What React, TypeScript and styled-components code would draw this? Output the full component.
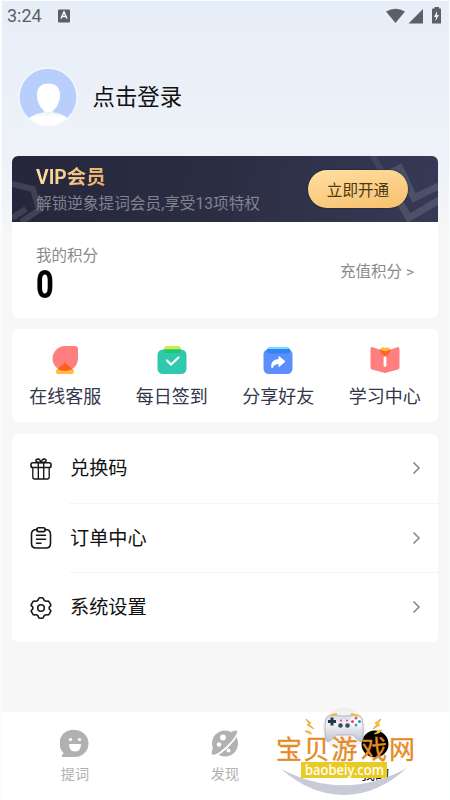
import React from "react";
import styled, { createGlobalStyle } from "styled-components";

const Global = createGlobalStyle`
  * { box-sizing: border-box; }
  body { margin: 0; background: #fff; }
`;

const Screen = styled.div`
  position: relative;
  width: 450px;
  height: 800px;
  overflow: hidden;
  display: flex;
  flex-direction: column;
  border: solid #fbfcfd;
  border-width: 1px 1px 0 2px;
  background: linear-gradient(180deg, #e6eef9 0, #ebf0f8 85px, #f0f3f8 195px, #f7f7f7 235px);
  font-family: "Roboto", "Noto Sans CJK SC", sans-serif;
  color: #111;
`;

const StatusBar = styled.header`
  display: flex;
  align-items: center;
  height: 30px;
  padding: 0 7px 0 5px;
  color: #5c6064;
`;

const Clock = styled.span`
  font-size: 18px;
  line-height: 30px;
  width: 50px;
`;

const StatusIcons = styled.div`
  display: flex;
  margin-left: auto;
`;

const Profile = styled.section`
  display: flex;
  align-items: center;
  gap: 14.5px;
  height: 60px;
  margin: 36px 0 29px 16px;
`;

const LoginText = styled.h1`
  margin: 0;
  font-size: 22.4px;
  line-height: 32px;
  font-weight: 400;
`;

const Card = styled.section<{ $height: number; $gap: number }>`
  flex: none;
  height: ${(p) => p.$height}px;
  margin: 0 11px ${(p) => p.$gap}px 10px;
  border-radius: 6px;
  overflow: hidden;
  background: #fff;
`;

const Banner = styled.div`
  position: relative;
  display: flex;
  align-items: center;
  justify-content: space-between;
  height: 66px;
  padding: 0 30px 0 24px;
  background: linear-gradient(100deg, #25263b, #2b2e43 50%, #363a56);
`;

const BannerPattern = styled.svg`
  position: absolute;
  inset: 0;
`;

const BannerCopy = styled.div`
  position: relative;
  padding-top: 2px;
`;

const VipTitle = styled.h2`
  margin: 0;
  width: max-content;
  font-size: 19.4px;
  line-height: 27px;
  font-weight: 700;
  background: linear-gradient(100deg, #fde0a6, #e8ad68);
  background-clip: text;
  color: transparent;
`;

const VipNote = styled.p`
  margin: 0;
  font-size: 15.65px;
  line-height: 25px;
  color: #82838f;
  white-space: nowrap;
`;

const OpenButton = styled.button`
  position: relative;
  width: 100px;
  height: 38px;
  padding: 0;
  border: 0;
  border-radius: 19px;
  background: linear-gradient(170deg, #ffdfa2, #f6c06d);
  box-shadow: 0 0 2px #1b1a28;
  color: #4e3812;
  font: 400 15.6px/37px "Noto Sans CJK SC", sans-serif;
`;

const Points = styled.div`
  display: flex;
  align-items: center;
  justify-content: space-between;
  height: 96px;
  padding: 0 24px;
  color: #8a8a8a;
  font-size: 15.5px;
`;

const PointsLabel = styled.div`
  line-height: 24px;
  margin-top: 7px;
`;

const PointsValue = styled.div`
  height: 35px;
  font-size: 38px;
  line-height: 34px;
  font-weight: 800;
  color: #000;
  transform: scaleX(0.81);
  transform-origin: left;
`;

const Recharge = styled.a`
  line-height: 24px;
  margin-top: 3px;
`;

const QuickGrid = styled.div`
  display: grid;
  grid-template-columns: repeat(4, 106.5px);
  height: 100%;
  padding-top: 16px;
`;

const QuickItem = styled.div`
  display: flex;
  flex-direction: column;
  align-items: center;
  gap: 7px;
  font-size: 18px;
  line-height: 29px;
  color: #34364a;
`;

const MenuRow = styled.div`
  display: flex;
  align-items: center;
  height: 69.5px;
  padding-left: 18px;
`;

const MenuBody = styled.div<{ $divided: boolean }>`
  display: flex;
  flex: 1;
  align-items: center;
  justify-content: space-between;
  height: 100%;
  margin-left: 17px;
  padding: 0 15px 0 1px;
  border-bottom: ${(p) => (p.$divided ? "1px solid #f5f5f5" : "1px solid transparent")};
  font-size: 19.2px;
`;

const MenuLabel = styled.span`
  line-height: 28px;
  margin-top: 2px;
`;

const TabBar = styled.nav`
  display: grid;
  grid-template-columns: repeat(3, 1fr);
  height: 88px;
  margin: auto -1px 0 -2px;
  background: #fff;
`;

const Tab = styled.div<{ $active?: boolean }>`
  display: flex;
  flex-direction: column;
  align-items: center;
  padding-top: 16px;
  gap: 4px;
  font-size: 14.2px;
  line-height: 20px;
  color: ${(p) => (p.$active ? "#111" : "#b1b1b1")};
`;

const Watermark = styled.svg`
  position: absolute;
  left: 273px;
  top: 705px;
`;

const Corner = styled.i`
  position: absolute;
  left: -2px;
  bottom: 0;
  width: 2px;
  height: 2px;
  background: #555;
  border-top-right-radius: 2px;
`;

const Avatar = () => (
  <svg width="60" height="60" viewBox="0 0 60 60">
    <defs>
      <clipPath id="face"><circle cx="30" cy="30" r="29" /></clipPath>
      <linearGradient id="body" x2="0" y2="1">
        <stop stopColor="#dce7fd" /><stop offset=".5" stopColor="#fff" />
      </linearGradient>
    </defs>
    <circle cx="30" cy="30" r="29" fill="#b8cffb" />
    <g clipPath="url(#face)">
      <path d="M25.500 41H35.500V45.500C42 46 48 49 51 53V60H9V53C13 49 19 46 25.500 45.500Z" fill="url(#body)" />
      <path d="M30.500 16.500C38 16.500 42.500 21 42 29C41.500 38 36 45 30.500 45S19.500 38 19 29C18.500 21 23 16.500 30.500 16.500Z" fill="#fff" />
    </g>
    <circle cx="30" cy="30" r="29" fill="none" stroke="#f5f9ff" strokeWidth="1.300" />
  </svg>
);

const ServiceIcon = () => (
  <svg width="30" height="30" viewBox="0 0 30 30">
    <rect x="6" y="24" width="18" height="5" rx="2" fill="#ffbd3f" />
    <path d="M15 1H25Q28 1 28 4V13C28 21 22 26 15 26S2.500 20 2.500 13.500 8 1 15 1Z" fill="#ff7f7e" />
    <path d="M15 17.500L22.500 24Q15 28 7.500 24Z" fill="#ff601d" />
  </svg>
);
const CheckinIcon = () => (
  <svg width="30" height="30" viewBox="0 0 30 30">
    <rect x="7" y="1" width="17" height="8" rx="3" fill="#c7ec55" />
    <rect x=".5" y="4.500" width="29" height="24.500" rx="5.500" fill="#31c9ad" />
    <path d="M7 4.500H24V6Q24 8 22 8H9Q7 8 7 6Z" fill="#23c66d" />
    <path d="M10 15.500L14 19.500L21.500 12.500" fill="none" stroke="#fff" strokeWidth="2.200" strokeLinecap="round" />
  </svg>
);
const ShareIcon = () => (
  <svg width="30" height="30" viewBox="0 0 30 30">
    <rect x="4" y="2" width="23" height="7" rx="3" fill="#80dcff" />
    <rect x=".5" y="4" width="29" height="25" rx="5.500" fill="#5d8ffc" />
    <path d="M4 4H27V6Q27 8.500 24 8.500H7Q4 8.500 4 6Z" fill="#3183f8" />
    <path d="M16 11.500L22 16.500L16 21.500V18.500Q11 18.500 9 23Q7 15 16 14.500Z" fill="#fff" stroke="#fff" strokeLinejoin="round" />
  </svg>
);
const LearnIcon = () => (
  <svg width="30" height="30" viewBox="0 0 30 30">
    <path d="M9.500 5Q11.500 1 15 3Q18.500 1 21 5L19 8H11Z" fill="#ffbd3f" />
    <path d="M2 2L15 6.500L28 2Q29.500 2 29.500 4V22Q29.500 24 28 24.500L15 28L2 24.500Q.500 24 .500 22V4Q.500 2 2 2Z" fill="#ff7f7e" />
    <path d="M9.500 4.500L15.200 6.500L21 4.500Q20 8 15.200 11.500Q10 8 9.500 4.500Z" fill="#ff651e" />
    <path d="M15 13V20.500" stroke="#fff" strokeWidth="2.800" strokeLinecap="round" />
  </svg>
);

const lineProps = { fill: "none", stroke: "#171717", strokeWidth: 1.6, strokeLinejoin: "round" as const, strokeLinecap: "round" as const };
const GiftIcon = () => (
  <svg width="22" height="22" viewBox="0 0 22 22" {...lineProps}>
    <rect x="1" y="4.700" width="20" height="4.800" rx="1.800" />
    <path d="M2.800 9.500V19Q2.800 21 4.800 21H17.200Q19.200 21 19.200 19V9.500M8.300 5V21M13.700 5V21M11 4.500Q7.500 4.700 5.800 3Q5.800 1 8 1Q10.200 1.200 11 4.500Q11.800 1.200 14 1Q16.200 1 16.200 3Q14.500 4.700 11 4.500" strokeWidth="1.350" />
  </svg>
);
const OrderIcon = () => (
  <svg width="22" height="22" viewBox="0 0 22 22" {...lineProps}>
    <path d="M7 2.500Q1.500 2.400 1.500 7V16.500Q1.500 21 6 21H16Q20.500 21 20.500 16.500V7Q20.500 2.400 15 2.500" />
    <rect x="6.800" y=".8" width="8.400" height="3.800" rx="1.900" />
    <path d="M6.500 8.300H15.500M6.500 12.300H15.500M6.500 16.300H11" />
  </svg>
);
const GearIcon = () => (
  <svg width="22" height="22" viewBox="0 0 22 22" {...lineProps}>
    <path d="M9.700 .8H12.300Q13.100 .8 13.400 1.800Q14.200 4.700 17 4.200Q18.400 3.700 19 4.700L20.600 7.400Q21.200 8.400 20.100 9.200Q18 11 20.100 12.800Q21.200 13.600 20.600 14.600L19 17.300Q18.400 18.300 17 17.800Q14.200 17.300 13.400 20.200Q13.100 21.200 12.300 21.200H9.700Q8.900 21.200 8.600 20.200Q7.800 17.300 5 17.800Q3.600 18.300 3 17.300L1.400 14.600Q.8 13.600 1.900 12.800Q4 11 1.900 9.200Q.8 8.400 1.400 7.400L3 4.700Q3.600 3.700 5 4.200Q7.800 4.700 8.600 1.800Q8.900 .8 9.700 .8Z" />
    <circle cx="11" cy="11" r="3.300" />
  </svg>
);
const Arrow = () => (
  <svg width="13" height="14" viewBox="0 0 13 14"><path d="M3.500 1.500L9 7L3.500 12.500" fill="none" stroke="#858585" strokeWidth="1.500" /></svg>
);

const quickItems = [
  { label: "在线客服", Icon: ServiceIcon },
  { label: "每日签到", Icon: CheckinIcon },
  { label: "分享好友", Icon: ShareIcon },
  { label: "学习中心", Icon: LearnIcon },
];
const menuItems = [
  { label: "兑换码", Icon: GiftIcon },
  { label: "订单中心", Icon: OrderIcon },
  { label: "系统设置", Icon: GearIcon },
];

export default function App() {
  return (
    <>
      <Global />
      <Screen>
        <StatusBar>
          <Clock>3:24</Clock>
          <svg width="14" height="14" viewBox="0 0 14 14">
            <rect x="1" y=".500" width="12" height="13" rx="1" fill="#5c6064" />
            <path d="M4 9.500L7 3L10 9.500M5.200 7.500H8.800" fill="none" stroke="#fff" strokeWidth="1.400" />
          </svg>
          <StatusIcons>
            <svg width="56" height="18" viewBox="0 0 56 18" fill="#5c6064">
              <path d="M0 4.500Q9.500-1 19 4.500L9.500 16Z" />
              <path d="M22.500 16.500L37 2V16.500Z" />
              <path d="M48.500 0H53V1.500H54.500Q55 1.500 55 2.500V16.500H46V2.500Q46 1.500 47 1.500H48.500Z" />
              <path d="M51 4L48 10H50L49.500 14L53 8H51Z" fill="#edf2f9" />
            </svg>
          </StatusIcons>
        </StatusBar>
        <Profile>
          <Avatar />
          <LoginText>点击登录</LoginText>
        </Profile>
        <Card $height={162} $gap={11}>
          <Banner>
            <BannerPattern width="427" height="66" viewBox="0 0 427 66" fill="none" stroke="#fff" strokeOpacity=".12" strokeWidth="6">
              <path d="M0 28L21 33L27 54L9 66M0 62L14 53" />
              <path d="M427 30L402 42L388 12L378 17M373 21L397 62L427 44" strokeWidth="7" />
              <path d="M361 0L374 22" strokeOpacity=".07" />
            </BannerPattern>
            <BannerCopy>
              <VipTitle>VIP会员</VipTitle>
              <VipNote>解锁逆象提词会员,享受13项特权</VipNote>
            </BannerCopy>
            <OpenButton>立即开通</OpenButton>
          </Banner>
          <Points>
            <div>
              <PointsLabel>我的积分</PointsLabel>
              <PointsValue>0</PointsValue>
            </div>
            <Recharge>充值积分 &gt;</Recharge>
          </Points>
        </Card>
        <Card $height={93} $gap={12}>
          <QuickGrid>
            {quickItems.map(({ label, Icon }) => (
              <QuickItem key={label}><Icon />{label}</QuickItem>
            ))}
          </QuickGrid>
        </Card>
        <Card $height={208} $gap={0}>
          {menuItems.map(({ label, Icon }, i) => (
            <MenuRow key={label}>
              <Icon />
              <MenuBody $divided={i < menuItems.length - 1}><MenuLabel>{label}</MenuLabel><Arrow /></MenuBody>
            </MenuRow>
          ))}
        </Card>
        <TabBar>
          <Tab>
            <svg width="30" height="32" viewBox="0 0 30 32">
              <path d="M15 2A13.500 13.500 0 1 1 15 29H2Q1 28 3.500 25A13.500 13.500 0 0 1 15 2Z" fill="#b1b1b1" />
              <circle cx="10.500" cy="11.500" r="1.600" fill="#fff" /><circle cx="19.500" cy="11.500" r="1.600" fill="#fff" />
              <path d="M9 16H21Q21 23.500 15 23.500T9 16Z" fill="#fff" />
            </svg>
            提词
          </Tab>
          <Tab>
            <svg width="30" height="32" viewBox="0 0 30 32">
              <circle cx="15" cy="15.500" r="13" fill="#b1b1b1" />
              <path d="M3 29Q19 21 28 5" fill="none" stroke="#fff" strokeWidth="2" />
              <path d="M3 20Q1 24 2 26.500Q5 28 13 21Q24 12 27 5Q28 2 25 2.500L21 4Z" fill="#b1b1b1" />
              <circle cx="13" cy="9.500" r="2.900" fill="#fff" /><circle cx="9" cy="16.500" r="2.300" fill="#fff" /><circle cx="18.500" cy="22.500" r="2" fill="#fff" />
            </svg>
            发现
          </Tab>
          <Tab $active>
            <svg width="30" height="32" viewBox="0 0 30 32"><circle cx="15" cy="16" r="13.500" fill="#000" /></svg>
            我的
          </Tab>
        </TabBar>
        <Watermark width="145" height="95" viewBox="275 706 145 95">
          <defs>
            <linearGradient id="pad" x2="0" y2="1">
              <stop stopColor="#d9d8e4" /><stop offset=".35" stopColor="#f3f1f6" /><stop offset="1" stopColor="#bfc1d2" />
            </linearGradient>
          </defs>
          <circle cx="344" cy="729" r="21.500" fill="#e7e7e7" opacity=".5" />
          <path d="M281 769Q345 802 407 768Q377 795 344 795T281 769Z" fill="#c8cad8" />
          <path d="M326 718C329 713.500 337 716 344 716S359 713.500 362 718Q364 729 363 738Q362 744 358 740L353 735H337L331 740Q326 744 325.500 738Q324 727 326 718Z" fill="url(#pad)" stroke="#a3a5b6" strokeWidth=".700" />
          <path d="M331 715L337 714M351 714L359 716" stroke="#f2b747" strokeWidth="2" />
          <path d="M328 721.500H336M332 717.500V725.500" stroke="#20394b" strokeWidth="3" />
          <circle cx="340.500" cy="725.500" r="2.300" fill="#2f4e60" /><circle cx="347.500" cy="725.500" r="2.300" fill="#2f4e60" />
          <circle cx="341" cy="720.500" r="1" fill="#dd496c" /><circle cx="347" cy="720.500" r="1" fill="#dd496c" />
          <circle cx="356" cy="721.500" r="5.500" fill="#faf8fc" />
          <circle cx="356" cy="718" r="1.500" fill="#e44f48" /><circle cx="352.500" cy="721.500" r="1.500" fill="#dd496c" /><circle cx="359.500" cy="721.500" r="1.500" fill="#288db8" /><circle cx="356" cy="725" r="1.500" fill="#37aab4" />
          <path d="M306 719L311 723L309 724L314 729L307 725L309 724ZM305 731L309 731L312 734L308 733ZM381 719L375 723L377 724L373 729L380 725L378 724ZM382 730L378 731L374 734L379 733Z" fill="#ffce32" stroke="#e9a52d" strokeWidth=".800" />
          <text x="276 303.500 331.500 361 389" y="758.500" fontFamily="'Noto Sans CJK SC'" fontSize="26" fontWeight="400" fill="#e58a24" stroke="#e58a24" strokeWidth=".3">宝贝游戏网</text>
          <rect x="301" y="762" width="86" height="16" fill="#e9cb26" />
          <text x="305" y="774.500" fontFamily="'Noto Sans', sans-serif" fontSize="14.500" fontWeight="500" fill="#fff" textLength="79" lengthAdjust="spacingAndGlyphs">baobeiy.com</text>
        </Watermark>
        <Corner />
      </Screen>
    </>
  );
}
